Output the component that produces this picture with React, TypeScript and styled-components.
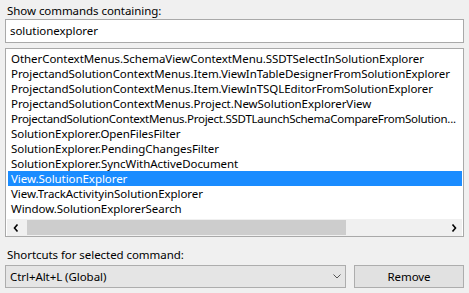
import React from "react";
import styled, { createGlobalStyle } from "styled-components";

const Global = createGlobalStyle`
  html, body { margin: 0; padding: 0; background: #f0f0f0; }
  body { font-family: "Segoe UI", "Noto Sans", sans-serif; font-size: 11.5px; letter-spacing: -0.06px; color: #000; }
`;

const Page = styled.div`
  width: 469px;
  height: 293px;
  box-sizing: border-box;
  padding: 2px 5px 0 5px;
  display: flex;
  flex-direction: column;
  background: #f0f0f0;
`;

const Label = styled.div<{ $top?: number }>`
  height: 17px;
  line-height: 17px;
  padding-left: 2px;
  margin-top: ${(p) => p.$top ?? 0}px;
  white-space: nowrap;
`;

const SearchBox = styled.div`
  height: 24px;
  box-sizing: border-box;
  border: 1px solid #a9a9a9;
  background: #fff;
  padding-left: 4px;
  line-height: 21px;
  width: 459px;
`;

const ListBox = styled.div`
  margin-top: 5px;
  width: 459px;
  height: 189px;
  box-sizing: border-box;
  border: 1px solid #a9a9a9;
  background: #fff;
  display: flex;
  flex-direction: column;
  padding: 2px 1px 0 1px;
  overflow: hidden;
`;

const Rows = styled.div`
  flex: 1;
  display: flex;
  flex-direction: column;
  padding-left: 1px;
`;

const Row = styled.div<{ $sel?: boolean; $tight?: boolean }>`
  height: 15px;
  line-height: 15px;
  padding-left: 3px;
  white-space: nowrap;
  overflow: hidden;
  letter-spacing: ${(p) => (p.$tight ? "-0.27px" : "-0.06px")};
  background: ${(p) => (p.$sel ? "#1a8cff" : "transparent")};
  color: ${(p) => (p.$sel ? "#fff" : "#000")};
`;

const HScroll = styled.div`
  height: 17px;
  display: flex;
  align-items: center;
  background: #f0f0f0;
`;

const Arrow = styled.div`
  width: 17px;
  height: 17px;
  display: flex;
  align-items: center;
  justify-content: center;
`;

const Track = styled.div`
  flex: 1;
  height: 17px;
  display: flex;
  align-items: center;
  padding-left: 3px;
`;

const Thumb = styled.div`
  width: 319px;
  height: 15px;
  background: #cdcdcd;
`;

const BottomRow = styled.div`
  display: flex;
  gap: 8px;
  margin-top: 2px;
`;

const Combo = styled.div`
  width: 341px;
  height: 23px;
  box-sizing: border-box;
  border: 1px solid #adadad;
  background: #e5e5e5;
  display: flex;
  align-items: center;
  padding-left: 4px;
`;

const ComboText = styled.div`
  flex: 1;
`;

const ComboArrow = styled.div`
  width: 17px;
  display: flex;
  justify-content: center;
  align-items: center;
`;

const Button = styled.div`
  width: 110px;
  height: 23px;
  box-sizing: border-box;
  border: 1px solid #adadad;
  background: #e1e1e1;
  display: flex;
  align-items: center;
  justify-content: center;
`;

const items = [
  "OtherContextMenus.SchemaViewContextMenu.SSDTSelectInSolutionExplorer",
  "ProjectandSolutionContextMenus.Item.ViewInTableDesignerFromSolutionExplorer",
  "ProjectandSolutionContextMenus.Item.ViewInTSQLEditorFromSolutionExplorer",
  "ProjectandSolutionContextMenus.Project.NewSolutionExplorerView",
  "ProjectandSolutionContextMenus.Project.SSDTLaunchSchemaCompareFromSolution...",
  "SolutionExplorer.OpenFilesFilter",
  "SolutionExplorer.PendingChangesFilter",
  "SolutionExplorer.SyncWithActiveDocument",
  "View.SolutionExplorer",
  "View.TrackActivityinSolutionExplorer",
  "Window.SolutionExplorerSearch",
];

export default function App() {
  return (
    <>
      <Global />
      <Page>
        <Label>Show commands containing:</Label>
        <SearchBox>solutionexplorer</SearchBox>
        <ListBox>
          <Rows>
            {items.map((t, i) => (
              <Row key={i} $sel={i === 8} $tight={t.length > 76}>
                {t}
              </Row>
            ))}
          </Rows>
          <HScroll>
            <Arrow>
              <svg width="6" height="8" viewBox="0 0 6 8">
                <path d="M4.5 0.5 L1.5 4 L4.5 7.5" stroke="#000" strokeWidth="1.6" fill="none" />
              </svg>
            </Arrow>
            <Track>
              <Thumb />
            </Track>
            <Arrow>
              <svg width="6" height="8" viewBox="0 0 6 8">
                <path d="M1.5 0.5 L4.5 4 L1.5 7.5" stroke="#000" strokeWidth="1.6" fill="none" />
              </svg>
            </Arrow>
          </HScroll>
        </ListBox>
        <Label $top={9}>Shortcuts for selected command:</Label>
        <BottomRow>
          <Combo>
            <ComboText>Ctrl+Alt+L (Global)</ComboText>
            <ComboArrow>
              <svg width="8" height="5" viewBox="0 0 8 5">
                <path d="M0.5 0.5 L4 4 L7.5 0.5" stroke="#555" strokeWidth="1" fill="none" />
              </svg>
            </ComboArrow>
          </Combo>
          <Button>Remove</Button>
        </BottomRow>
      </Page>
    </>
  );
}
